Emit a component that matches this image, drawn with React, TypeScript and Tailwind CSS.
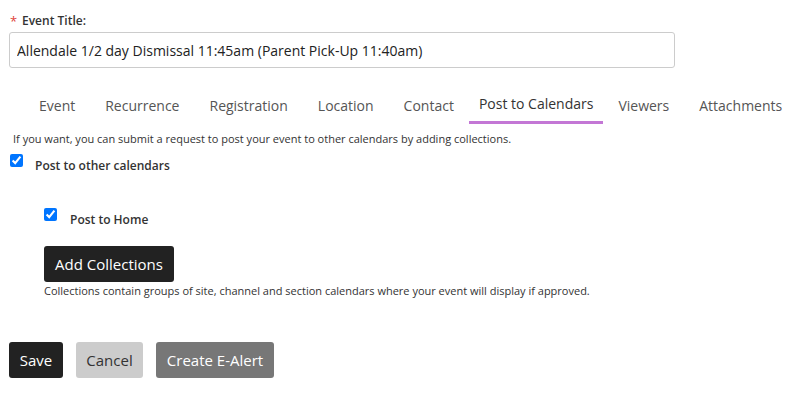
import type { ReactElement } from "react";

const tabs = [
  "Event",
  "Recurrence",
  "Registration",
  "Location",
  "Contact",
  "Post to Calendars",
  "Viewers",
  "Attachments",
];
const activeTab = "Post to Calendars";

export default function App(): ReactElement {
  return (
    <div className="min-h-[397px] w-[793px] bg-white font-['Open_Sans',sans-serif] text-[#333]">
      <div className="pt-[13px] pl-[9px]">
        <div className="flex items-center text-[12px] font-semibold leading-[16px]">
          <span className="ml-[1px] w-[12px] text-[13px] font-normal text-[#e0433a]">*</span>
          <span>Event Title:</span>
        </div>
        <input
          className="mt-[3px] h-[36px] w-[666px] rounded-[3px] border border-[#cccccc] px-[7px] text-[14px] text-[#222] outline-none"
          defaultValue="Allendale 1/2 day Dismissal 11:45am (Parent Pick-Up 11:40am)"
          type="text"
        />
      </div>

      <nav className="mt-[28px] flex whitespace-nowrap pl-[24px] text-[14px] leading-[20px]">
        {tabs.map((tab) => {
          const active = tab === activeTab;
          return (
            <div
              className={
                active
                  ? "-mt-[2px] border-b-[3px] border-[#c377d5] px-[10px] pb-[7px] text-[#333]"
                  : "px-[15px] pb-[8px] text-[#555]"
              }
              key={tab}
            >
              {tab}
            </div>
          );
        })}
      </nav>

      <p className="mt-[7px] pl-[13px] text-[11px] leading-[15px] text-[#333]">
        If you want, you can submit a request to post your event to other calendars by adding
        collections.
      </p>

      <label className="mt-[8px] flex items-start pl-[10px]">
        <input className="m-0 h-[13px] w-[13px] accent-[#0075ff]" defaultChecked type="checkbox" />
        <span className="mt-[4px] ml-[12px] text-[12px] font-semibold leading-[16px]">
          Post to other calendars
        </span>
      </label>

      <div className="pl-[44px]">
        <label className="mt-[34px] flex items-start">
          <input className="m-0 h-[13px] w-[13px] accent-[#0075ff]" defaultChecked type="checkbox" />
          <span className="mt-[4px] ml-[13px] text-[12px] font-semibold leading-[16px]">
            Post to Home
          </span>
        </label>

        <button
          className="mt-[18px] flex h-[36px] items-center rounded-[3px] bg-[#222] px-[11px] text-[15px] text-white"
          type="button"
        >
          Add Collections
        </button>
        <p className="mt-[1px] text-[11px] leading-[15px] text-[#333]">
          Collections contain groups of site, channel and section calendars where your event will
          display if approved.
        </p>
      </div>

      <div className="mt-[44px] flex gap-[13px] pl-[9px]">
        <button
          className="h-[36px] w-[54px] rounded-[3px] bg-[#222] text-[15px] text-white"
          type="button"
        >
          Save
        </button>
        <button
          className="h-[36px] w-[67px] rounded-[3px] bg-[#cccccc] text-[15px] text-[#333]"
          type="button"
        >
          Cancel
        </button>
        <button
          className="h-[36px] w-[118px] rounded-[3px] bg-[#777] text-[15px] text-white"
          type="button"
        >
          Create E-Alert
        </button>
      </div>
    </div>
  );
}
